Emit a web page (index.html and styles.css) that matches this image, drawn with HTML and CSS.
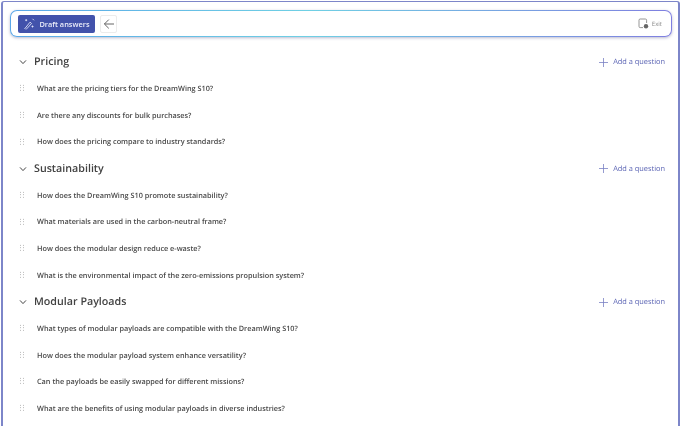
FILE: index.html
```html
<!DOCTYPE html>
<html lang="en">
<head>
<meta charset="utf-8">
<title>Draft answers</title>
<link rel="stylesheet" href="styles.css">
</head>
<body>
<div class="frame">
  <header class="toolbar">
    <button class="draft">
      <svg class="ico" width="12" height="12" viewBox="0 0 12 12" fill="none" stroke="#dfe2f6" stroke-width="0.9"><path d="M1.5 11 7 4.2l1.6 1.3L3 11.5"/><path d="M2.2 2.2h2M3.2 1.2v2M9.5 7.5v2M8.5 8.5h2M9.5 .8l1.5 1.5"/></svg>
      <span>Draft answers</span>
    </button>
    <button class="back" aria-label="Back">
      <svg width="12" height="12" viewBox="0 0 12 12" fill="none" stroke="#555" stroke-width="0.9"><path d="M11 6H1.4M5.8 1.6 1.4 6l4.4 4.4"/></svg>
    </button>
    <div class="exit">
      <svg width="11" height="11" viewBox="0 0 11 11" fill="none" stroke="#8a8a8a" stroke-width="0.9"><path d="M5 9.6H2.2a1.2 1.2 0 0 1-1.2-1.2V2.2A1.2 1.2 0 0 1 2.2 1h5.2a1.2 1.2 0 0 1 1.2 1.2V5"/><circle cx="8" cy="8.2" r="2.2" fill="#666" stroke="none"/></svg>
      <span>Exit</span>
    </div>
  </header>

  <section class="group">
    <div class="head">
      <svg class="chev" width="10" height="10" viewBox="0 0 10 10" fill="none" stroke="#444" stroke-width="1"><path d="M2 3.4 5 6.6l3-3.2"/></svg>
      <h2>Pricing</h2>
      <a class="add"><svg width="9" height="9" viewBox="0 0 9 9" stroke="#7a82c4" stroke-width="0.8"><path d="M4.5 0v9M0 4.5h9"/></svg><span>Add a question</span></a>
    </div>
    <div class="q"><i class="grip"></i><span>What are the pricing tiers for the DreamWing S10?</span></div>
    <div class="q"><i class="grip"></i><span>Are there any discounts for bulk purchases?</span></div>
    <div class="q"><i class="grip"></i><span>How does the pricing compare to industry standards?</span></div>
  </section>

  <section class="group">
    <div class="head">
      <svg class="chev" width="10" height="10" viewBox="0 0 10 10" fill="none" stroke="#444" stroke-width="1"><path d="M2 3.4 5 6.6l3-3.2"/></svg>
      <h2>Sustainability</h2>
      <a class="add"><svg width="9" height="9" viewBox="0 0 9 9" stroke="#7a82c4" stroke-width="0.8"><path d="M4.5 0v9M0 4.5h9"/></svg><span>Add a question</span></a>
    </div>
    <div class="q"><i class="grip"></i><span>How does the DreamWing S10 promote sustainability?</span></div>
    <div class="q"><i class="grip"></i><span>What materials are used in the carbon-neutral frame?</span></div>
    <div class="q"><i class="grip"></i><span>How does the modular design reduce e-waste?</span></div>
    <div class="q"><i class="grip"></i><span>What is the environmental impact of the zero-emissions propulsion system?</span></div>
  </section>

  <section class="group">
    <div class="head">
      <svg class="chev" width="10" height="10" viewBox="0 0 10 10" fill="none" stroke="#444" stroke-width="1"><path d="M2 3.4 5 6.6l3-3.2"/></svg>
      <h2>Modular Payloads</h2>
      <a class="add"><svg width="9" height="9" viewBox="0 0 9 9" stroke="#7a82c4" stroke-width="0.8"><path d="M4.5 0v9M0 4.5h9"/></svg><span>Add a question</span></a>
    </div>
    <div class="q"><i class="grip"></i><span>What types of modular payloads are compatible with the DreamWing S10?</span></div>
    <div class="q"><i class="grip"></i><span>How does the modular payload system enhance versatility?</span></div>
    <div class="q"><i class="grip"></i><span>Can the payloads be easily swapped for different missions?</span></div>
    <div class="q"><i class="grip"></i><span>What are the benefits of using modular payloads in diverse industries?</span></div>
  </section>
</div>
</body>
</html>
```
FILE: styles.css
```css
* { box-sizing: border-box; }
html, body { margin: 0; height: 100%; background: #fff; overflow: hidden; }
body { font-family: "Open Sans", "Noto Sans", sans-serif; color: #424242; text-rendering: geometricPrecision; }
.frame {
  margin: 1px 1px 0 1px;
  width: 679px;
  height: 425px;
  border: 2px solid #7d86c9;
  border-bottom: 0;
  border-top-width: 1px;
  border-radius: 3px 3px 0 0;
  padding: 8px 6px 0 7px;
  filter: blur(0.35px);
}
.toolbar {
  height: 27px;
  display: flex;
  align-items: center;
  gap: 5px;
  padding: 0 7px;
  border: 1.5px solid transparent;
  border-radius: 7px;
  background: linear-gradient(#fff, #fff) padding-box,
    linear-gradient(90deg, #5aa7e8 0%, #6fd0e4 45%, #7f7fe0 100%) border-box;
  box-shadow: 0 1px 3px rgba(60, 60, 120, .35);
  margin-bottom: 12px;
}
button { font: inherit; padding: 0; cursor: pointer; }
.draft {
  width: 77px;
  height: 18px;
  display: flex;
  align-items: center;
  justify-content: center;
  gap: 4px;
  border: 0;
  border-radius: 2px;
  background: #4252ab;
  color: #eceefa;
  font-size: 7.4px;
  font-weight: 600;
}
.back {
  width: 17px;
  height: 18px;
  display: flex;
  align-items: center;
  justify-content: center;
  background: #fff;
  border: 1px solid #ececec;
  border-radius: 2px;
}
.exit {
  margin-left: auto;
  display: flex;
  align-items: center;
  gap: 3px;
  margin-right: 2px;
  font-size: 6px;
  color: #8a8a8a;
}
.group { display: flex; flex-direction: column; }
.head {
  height: 26.67px;
  display: flex;
  align-items: center;
  padding-left: 8px;
}
.chev { margin-right: 6px; }
h2 { margin: 0; font-size: 10.7px; font-weight: 600; color: #424242; }
.add {
  margin-left: auto;
  margin-right: 7px;
  display: flex;
  align-items: center;
  gap: 5px;
  color: #5b64b4;
  font-size: 7.4px;
}
.q {
  height: 26.67px;
  display: flex;
  align-items: center;
  padding-left: 9px;
  font-size: 7.3px;
  font-weight: 600;
  color: #484848;
}
.grip {
  width: 5px;
  height: 7.5px;
  margin-right: 13px;
  margin-top: -2px;
  background-image: radial-gradient(circle, #aaa 0.6px, transparent 0.8px);
  background-size: 3px 2.5px;
}
```
